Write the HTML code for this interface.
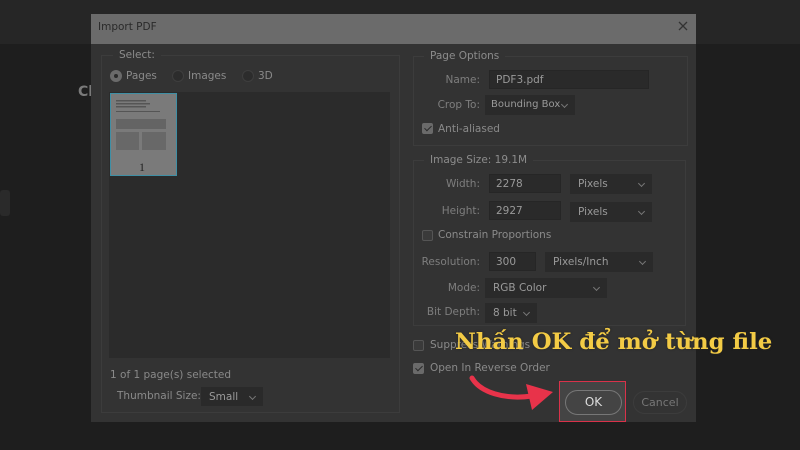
<!DOCTYPE html>
<html><head><meta charset="utf-8"><style>
*{margin:0;padding:0;box-sizing:border-box}
body{width:800px;height:450px;overflow:hidden;background:#1e1e1e;font-family:"DejaVu Sans","Liberation Sans",sans-serif;font-size:10.5px;color:#8a8a8a;position:relative}
.a{position:absolute}
.box{position:absolute;border:1px solid #3c3c3c}
.leg{position:absolute;background:#333;padding:0 6px;color:#8c8c8c}
.inp{position:absolute;background:#2a2a2a;border:1px solid #262626;color:#9a9a9a;padding:2px 6px;height:19px;line-height:14px}
.sel{position:absolute;background:#2a2a2a;color:#9a9a9a;padding:3px 8px;height:20px;line-height:14px}
.sel:after{content:"";position:absolute;right:8px;top:7px;width:4px;height:4px;border-right:1px solid #777;border-bottom:1px solid #777;transform:rotate(45deg)}
.lbl{position:absolute;text-align:right;color:#7e7e7e}
.cb{position:absolute;width:11px;height:11px;border:1px solid #555;border-radius:2px;background:#3a3a3a}
.cb.on{background:#6a6a6a;border-color:#6a6a6a}
.cb.on:after{content:"";position:absolute;left:3px;top:0px;width:3px;height:6px;border-right:1.5px solid #2a2a2a;border-bottom:1.5px solid #2a2a2a;transform:rotate(45deg)}
.rad{position:absolute;width:12px;height:12px;border-radius:50%;border:1px solid #3e3e3e;background:#2c2c2c}
</style></head><body>
<div class="a" style="left:0;top:0;width:800px;height:44px;background:#262626"></div>
<div class="a" style="left:78px;top:84px;font-size:14px;color:#7a7a7a;font-weight:bold">Cl</div>
<div class="a" style="left:0;top:190px;width:10px;height:26px;background:#2a2a2a;border-radius:3px"></div>

<div class="a" style="left:91px;top:14px;width:605px;height:408px;background:#333"></div>
<div class="a" style="left:91px;top:14px;width:605px;height:30px;background:#6b6b6b"></div>
<div class="a" style="left:98px;top:21px;font-size:10.5px;color:#2a2a2a">Import PDF</div>
<svg class="a" style="left:678px;top:21px" width="10" height="10"><path d="M1 1L9 9M9 1L1 9" stroke="#333" stroke-width="1.3"/></svg>

<div class="box" style="left:101px;top:55px;width:299px;height:358px"></div>
<div class="leg" style="left:113px;top:49px">Select:</div>
<div class="rad" style="left:110px;top:70px;background:#6a6a6a;border-color:#6a6a6a"></div>
<div class="a" style="left:114px;top:74px;width:4px;height:4px;border-radius:50%;background:#2a2a2a"></div>
<div class="a" style="left:126px;top:70px;color:#8a8a8a">Pages</div>
<div class="rad" style="left:172px;top:70px"></div>
<div class="a" style="left:188px;top:70px">Images</div>
<div class="rad" style="left:242px;top:70px"></div>
<div class="a" style="left:258px;top:70px">3D</div>
<div class="a" style="left:109px;top:92px;width:281px;height:266px;background:#2b2b2b"></div>
<div class="a" style="left:110px;top:93px;width:67px;height:83px;background:#7a7a7a;border:1px solid #3f8fa5"></div>
<svg class="a" style="left:114px;top:97px" width="58" height="60">
<g fill="#555"><rect x="2" y="3" width="30" height="1.5"/><rect x="2" y="6" width="34" height="1.5"/><rect x="2" y="9" width="30" height="1.5"/><rect x="2" y="14" width="44" height="1"/>
<rect x="2" y="22" width="50" height="10" opacity=".6"/><rect x="2" y="35" width="23" height="18" opacity=".5"/><rect x="28" y="35" width="24" height="18" opacity=".5"/></g></svg>
<div class="a" style="left:139px;top:160px;font-family:'Liberation Serif',serif;font-size:12px;color:#222">1</div>
<div class="a" style="left:110px;top:369px">1 of 1 page(s) selected</div>
<div class="a" style="left:117px;top:390px">Thumbnail Size:</div>
<div class="sel" style="left:201px;top:387px;width:62px;height:19px">Small</div>

<div class="box" style="left:413px;top:56px;width:275px;height:90px"></div>
<div class="leg" style="left:424px;top:50px">Page Options</div>
<div class="lbl" style="left:420px;top:74px;width:60px">Name:</div>
<div class="inp" style="left:489px;top:70px;width:160px">PDF3.pdf</div>
<div class="lbl" style="left:420px;top:99px;width:60px">Crop To:</div>
<div class="sel" style="left:485px;top:95px;width:90px;padding-left:6px;font-size:10px;white-space:nowrap">Bounding Box</div>
<div class="cb on" style="left:422px;top:123px"></div>
<div class="a" style="left:438px;top:123px">Anti-aliased</div>

<div class="box" style="left:413px;top:160px;width:273px;height:166px"></div>
<div class="leg" style="left:424px;top:154px">Image Size: 19.1M</div>
<div class="lbl" style="left:420px;top:178px;width:60px">Width:</div>
<div class="inp" style="left:489px;top:174px;width:72px">2278</div>
<div class="sel" style="left:570px;top:174px;width:82px">Pixels</div>
<div class="lbl" style="left:420px;top:205px;width:60px">Height:</div>
<div class="inp" style="left:489px;top:201px;width:72px">2927</div>
<div class="sel" style="left:570px;top:202px;width:82px">Pixels</div>
<div class="cb" style="left:422px;top:230px"></div>
<div class="a" style="left:438px;top:229px">Constrain Proportions</div>
<div class="lbl" style="left:420px;top:256px;width:60px">Resolution:</div>
<div class="inp" style="left:489px;top:252px;width:47px">300</div>
<div class="sel" style="left:545px;top:252px;width:108px">Pixels/Inch</div>
<div class="lbl" style="left:420px;top:282px;width:60px">Mode:</div>
<div class="sel" style="left:485px;top:278px;width:122px">RGB Color</div>
<div class="lbl" style="left:420px;top:306px;width:60px">Bit Depth:</div>
<div class="sel" style="left:485px;top:303px;width:52px">8 bit</div>

<div class="cb" style="left:413px;top:340px"></div>
<div class="a" style="left:430px;top:339px">Suppress Warnings</div>
<div class="cb on" style="left:413px;top:363px"></div>
<div class="a" style="left:430px;top:362px">Open In Reverse Order</div>

<div class="a" style="left:559px;top:381px;width:67px;height:41px;background:#444;border:1.5px solid #d9324a"></div>
<div class="a" style="left:565px;top:390px;width:57px;height:25px;border:1.5px solid #777;border-radius:13px;text-align:center;line-height:22px;color:#ddd;font-size:12px">OK</div>
<div class="a" style="left:633px;top:391px;width:54px;height:23px;border:1px solid #3c3c3c;border-radius:12px;text-align:center;line-height:21px;color:#777;font-size:11px">Cancel</div>

<svg class="a" style="left:468px;top:372px" width="90" height="40">
<path d="M4 6 C12 20 36 28 64 24" stroke="#e8334a" stroke-width="5" fill="none" stroke-linecap="round"/>
<polygon points="58,12 85,20 64,38" fill="#e8334a"/>
</svg>
<div class="a" style="left:455px;top:329px;font-family:'DejaVu Serif','Liberation Serif',serif;font-weight:bold;font-size:22.8px;color:#f3cb45;white-space:nowrap;text-shadow:0 0 2px #222">Nhấn OK để mở từng file</div>
</body></html>
